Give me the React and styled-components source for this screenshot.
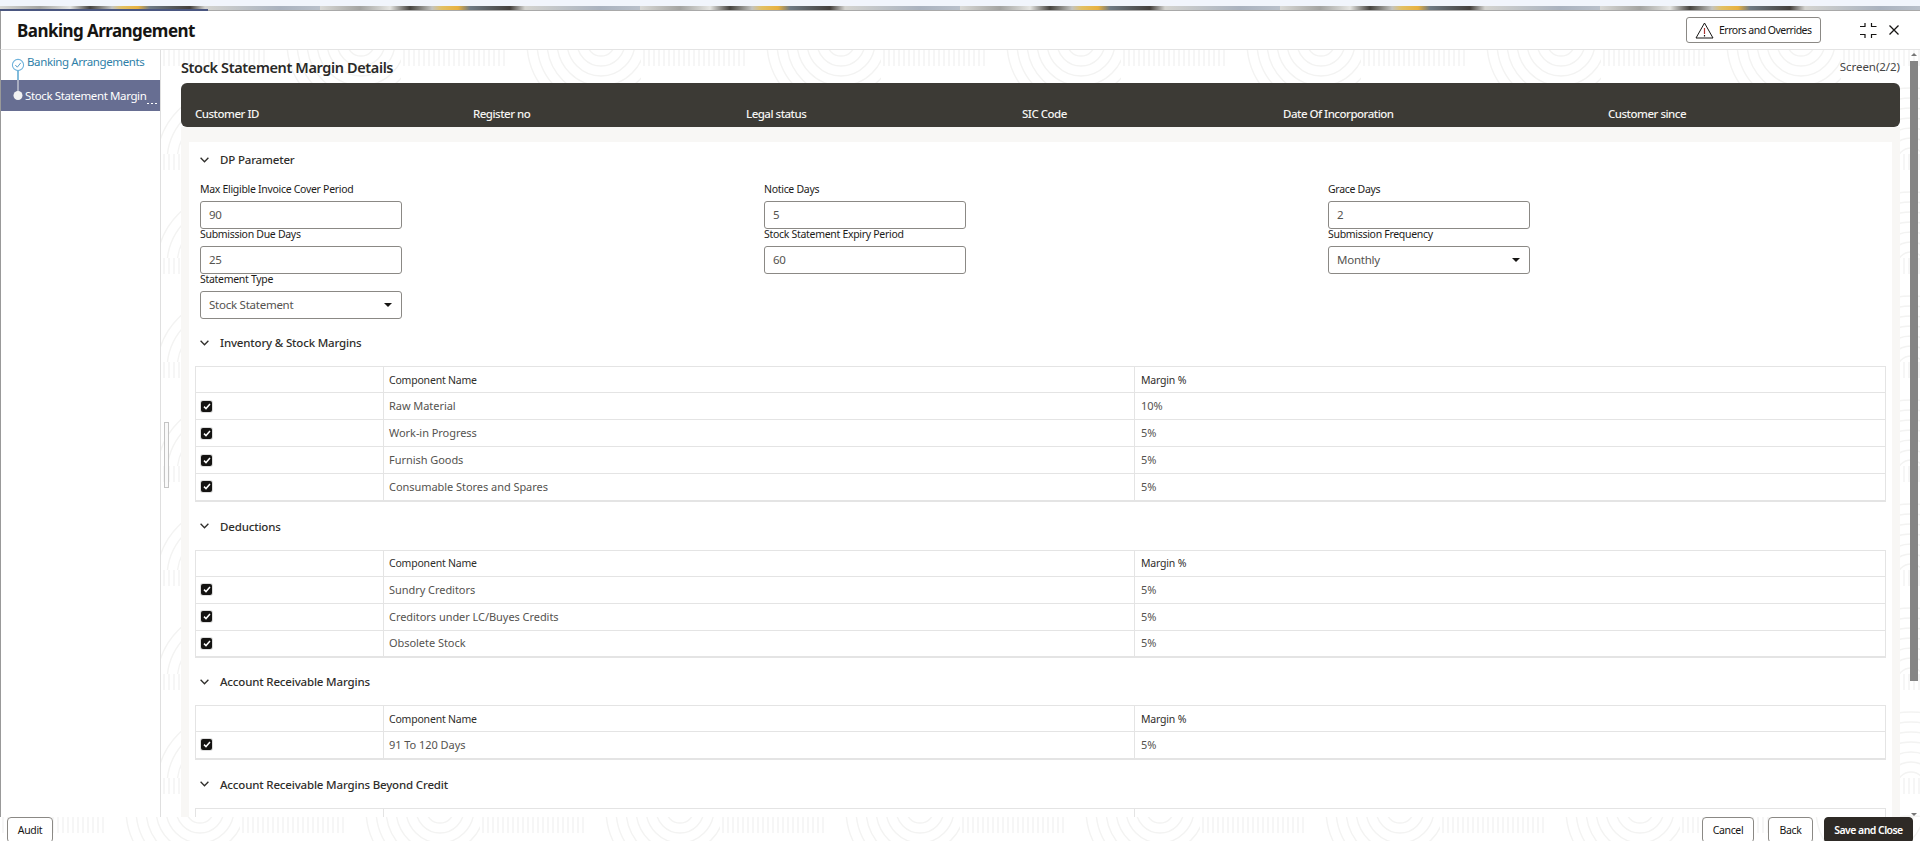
import React from 'react';
import styled, { createGlobalStyle } from 'styled-components';

// light fingerprint texture used behind the content area and the footer
const arcs = [14, 24, 34, 44, 54, 64, 74]
  .map(r => `<circle cx="70" cy="112" r="${r}"/><circle cx="200" cy="-8" r="${r}"/>`)
  .join('');
const ticks = Array.from({ length: 22 })
  .map((_, i) => `<path d="M${118 + i * 5} 56v44"/><path d="M${i * 5 - 2} 0v16"/>`)
  .join('');
const patternSvg = `<svg xmlns="http://www.w3.org/2000/svg" width="240" height="104"><g fill="none" stroke="#f3f3f2" stroke-width="1.4">${arcs}${ticks}</g></svg>`;
const patternUrl = `url("data:image/svg+xml,${encodeURIComponent(patternSvg)}")`;

const GlobalStyle = createGlobalStyle`
  html, body {
    margin: 0;
    background: #fff;
    font-family: "Noto Sans", "Open Sans", Arial, sans-serif;
  }
  * {
    box-sizing: border-box;
  }
`;

const Page = styled.div`
  position: relative;
  display: flex;
  flex-direction: column;
  width: 1920px;
  height: 841px;
  overflow: hidden;
  background: #fff;
`;

const Banner = styled.div`
  flex: none;
  height: 11px;
  border-top: 6px solid #f1f5fc;
  border-bottom: 1px solid #a9a9a9;
  background: repeating-linear-gradient(
    90deg,
    #d9d9d6 0,
    #a3a3a0 40px,
    #e5e5e2 70px,
    #45433f 90px,
    #c4c4c0 112px,
    #e2c063 122px,
    #e8b13f 138px,
    #6f7b85 150px,
    #44403c 190px,
    #d4d4d0 205px,
    #a9b2bf 280px,
    #b9c0ca 320px
  );
`;

const Progress = styled.div`
  position: absolute;
  left: 0;
  top: 9px;
  width: 208px;
  height: 2px;
  background: #4a5680;
`;

const Header = styled.header`
  flex: none;
  display: flex;
  align-items: center;
  height: 39px;
  padding: 0 21px 0 16px;
  border-left: 1px solid #999;
  border-bottom: 1px solid #e4e4e4;
  color: #161513;
`;

const Title = styled.h1`
  flex: 1;
  margin: 0;
  font-size: 17px;
  font-weight: 700;
  letter-spacing: -0.55px;
`;

const ErrorsButton = styled.button`
  display: flex;
  align-items: center;
  gap: 5px;
  width: 135px;
  height: 26px;
  margin-right: 39px;
  padding: 0 8px;
  background: #fff;
  border: 1px solid #8b8985;
  border-radius: 3px;
  font: 400 10.5px "Noto Sans", sans-serif;
  letter-spacing: -0.5px;
  color: #161513;
  white-space: nowrap;
`;

const HeaderIcon = styled.svg`
  display: block;
  flex: none;
  margin-right: ${props => props.$gap || 0}px;
`;

const Body = styled.div`
  flex: 1;
  display: flex;
  min-height: 0;
`;

const Sidebar = styled.nav`
  flex: none;
  width: 161px;
  background: #fff;
  border-left: 1px solid #999;
  border-right: 1px solid #dfdfdf;
`;

const Step = styled.div`
  position: relative;
  display: flex;
  align-items: flex-start;
  height: ${props => (props.$active ? 31 : 30)}px;
  background: ${props => (props.$active ? '#676e92' : 'transparent')};
  color: ${props => (props.$active ? '#fff' : '#2f7fa8')};
  font-size: 11.5px;
  letter-spacing: -0.38px;
  white-space: nowrap;
`;

const StepMarker = styled.svg`
  display: block;
  flex: none;
  margin-left: 5px;
`;

const StepLabel = styled.span`
  margin-left: ${props => (props.$active ? -1 : 1)}px;
  line-height: 16px;
  padding-top: ${props => (props.$active ? 8 : 4)}px;
`;

const Dots = styled.span`
  position: absolute;
  right: 3px;
  bottom: 7px;
  width: 10px;
  height: 1px;
  background: repeating-linear-gradient(90deg, #fff 0, #fff 2px, transparent 2px, transparent 4px);
`;

const Main = styled.main`
  position: relative;
  flex: 1;
  min-width: 0;
  padding: 0 20px 0 20px;
  overflow: hidden;
  background: #fff ${patternUrl};
`;

const PageHead = styled.div`
  display: flex;
  align-items: center;
  justify-content: space-between;
  height: 33px;
`;

const PageTitle = styled.h2`
  margin: 0;
  font-size: 14.5px;
  font-weight: 600;
  letter-spacing: -0.38px;
  color: #2a2927;
`;

const ScreenNo = styled.span`
  font-size: 11.5px;
  letter-spacing: -0.05px;
  color: #444;
`;

const InfoBar = styled.div`
  display: flex;
  align-items: flex-end;
  height: 44px;
  padding: 0 0 4px 14px;
  background: #3c3a35;
  border-radius: 6px;
  color: #f5f4f2;
`;

const InfoLabel = styled.span`
  flex: none;
  width: ${props => props.$width}px;
  font-size: 11.5px;
  font-weight: 500;
  letter-spacing: -0.5px;
  line-height: 18px;
`;

const Panel = styled.div`
  padding: 15px 8px 0;
  background: #f8f7f5;
`;

const Card = styled.div`
  padding-bottom: 40px;
  background: #fff;
`;

const SectionHead = styled.div`
  display: flex;
  align-items: center;
  height: 36px;
  margin-top: ${props => props.$top}px;
  padding: 0 0 1px 11px;
  color: #2f2e2b;
  font-size: 11.5px;
  font-weight: 500;
  letter-spacing: -0.17px;
`;

const Chevron = styled.svg`
  display: block;
  flex: none;
  margin-right: 11px;
`;

const FieldGrid = styled.div`
  display: grid;
  grid-template-columns: repeat(3, 564px);
  grid-auto-rows: 45px;
  margin-top: 6px;
  padding-left: 11px;
`;

const Field = styled.div`
  display: flex;
  flex-direction: column;
  width: 202px;
`;

const FieldLabel = styled.label`
  height: 17px;
  font-size: 10.5px;
  line-height: 10px;
  letter-spacing: -0.3px;
  color: #1d1c1a;
  white-space: nowrap;
`;

const InputBox = styled.div`
  display: flex;
  align-items: center;
  justify-content: space-between;
  height: 28px;
  padding: 0 9px 2px 8px;
  background: #fff;
  border: 1px solid #8b8985;
  border-radius: 3px;
  font-size: 11.5px;
  letter-spacing: -0.25px;
  color: #55534f;
`;

const Caret = styled.span`
  width: 0;
  height: 0;
  margin-top: 2px;
  border-left: 4px solid transparent;
  border-right: 4px solid transparent;
  border-top: 4px solid #161513;
`;

const Table = styled.table`
  width: 1691px;
  margin: 5px 0 0 6px;
  border-collapse: collapse;
  table-layout: fixed;
  font-size: 11px;
  color: #55534f;
  border-bottom: 2px solid #e4e4e4;

  col:first-child {
    width: 188px;
  }
  col:nth-child(2) {
    width: 751px;
  }
  th:last-child,
  td:last-child {
    padding-left: 6px;
  }
`;

const HeadCell = styled.th`
  height: 26px;
  padding: 0 5px;
  border: 1px solid #e4e4e4;
  font-size: 10.5px;
  font-weight: 400;
  letter-spacing: -0.2px;
  text-align: left;
  color: #2f2e2b;
`;

const Cell = styled.td`
  height: 27px;
  padding: 0 5px 1px;
  border: 1px solid #e4e4e4;
  font-size: 11px;
  letter-spacing: -0.05px;
`;

const Check = styled.span`
  display: flex;
  align-items: center;
  justify-content: center;
  width: 11px;
  height: 11px;
  margin-top: 1px;
  background: #141311;
  border-radius: 2px;
  box-shadow: 0 0 0 1px #ddd;
`;

const Scrollbar = styled.div`
  position: absolute;
  top: 3px;
  right: 2px;
  display: flex;
  flex-direction: column;
  align-items: center;
  width: 8px;
  height: 763px;
`;

const ScrollArrow = styled.span`
  flex: none;
  width: 0;
  height: 0;
  border-left: 3px solid transparent;
  border-right: 3px solid transparent;
  border-${props => (props.$down ? 'top' : 'bottom')}: 3px solid #777;
`;

const ScrollThumb = styled.span`
  flex: none;
  width: 8px;
  height: 620px;
  margin: 5px 0 auto;
  background: #858585;
`;

const Handle = styled.span`
  position: absolute;
  left: 3px;
  top: 372px;
  width: 5px;
  height: 66px;
  background: #fafafa;
  border: 1px solid #c4c4c4;
`;

const Footer = styled.footer`
  flex: none;
  display: flex;
  justify-content: space-between;
  height: 24px;
  padding: 0 7px;
  background: #fff ${patternUrl};
  position: relative;
`;

const FooterGroup = styled.div`
  display: flex;
`;

const FooterButton = styled.button`
  width: ${props => props.$width}px;
  height: 26px;
  margin-left: ${props => props.$left || 0}px;
  padding: 0;
  background: ${props => (props.$primary ? '#2e2a26' : '#fff')};
  border: 1px solid ${props => (props.$primary ? '#2e2a26' : '#8b8985')};
  border-radius: 4px;
  font: ${props => (props.$primary ? 600 : 400)} 10.5px "Noto Sans", sans-serif;
  letter-spacing: ${props => (props.$primary ? -0.55 : -0.35)}px;
  color: ${props => (props.$primary ? '#fff' : '#161513')};
`;

const WarningIcon = () => (
  <HeaderIcon width="19" height="17" viewBox="0 0 19 17" fill="none">
    <path d="M9.5 1 18 16H1L9.5 1Z" stroke="#161513" strokeWidth="1" strokeLinejoin="round" />
    <path d="M9.5 6v6" stroke="#a33" strokeWidth="1.2" />
    <path d="M9.5 13v1.5" stroke="#161513" strokeWidth="1.2" />
  </HeaderIcon>
);

const CompressIcon = () => (
  <HeaderIcon width="17" height="15" viewBox="0 0 17 15" fill="none" $gap={12}>
    <path d="M0 3.5h5V0M11.5 0v3.5h5M0 11.5h5V15M16.5 11.5h-5V15" stroke="#161513" strokeWidth="1.2" />
  </HeaderIcon>
);

const CloseIcon = () => (
  <HeaderIcon width="10" height="10" viewBox="0 0 10 10" fill="none">
    <path d="M.5.5l9 9M9.5.5l-9 9" stroke="#161513" strokeWidth="1.3" />
  </HeaderIcon>
);

const DownChevron = () => (
  <Chevron width="9" height="6" viewBox="0 0 9 6" fill="none">
    <path d="M.6.8 4.5 4.8 8.4.8" stroke="#2f2e2b" strokeWidth="1.3" />
  </Chevron>
);

const CheckBox = () => (
  <Check>
    <svg width="8" height="7" viewBox="0 0 8 7" fill="none">
      <path d="M1 3.6 3 5.6 7 1" stroke="#fff" strokeWidth="1.5" />
    </svg>
  </Check>
);

const sections = [
  {
    title: 'Inventory & Stock Margins',
    top: 6,
    rows: [
      ['Raw Material', '10%'],
      ['Work-in Progress', '5%'],
      ['Furnish Goods', '5%'],
      ['Consumable Stores and Spares', '5%'],
    ],
  },
  {
    title: 'Deductions',
    top: 7,
    rows: [
      ['Sundry Creditors', '5%'],
      ['Creditors under LC/Buyes Credits', '5%'],
      ['Obsolete Stock', '5%'],
    ],
  },
  {
    title: 'Account Receivable Margins',
    top: 6,
    rows: [['91 To 120 Days', '5%']],
  },
  // only the top edge of this last table shows above the footer
  {
    title: 'Account Receivable Margins Beyond Credit',
    top: 7,
    rows: [],
    noLabels: true,
  },
];

const fields = [
  { label: 'Max Eligible Invoice Cover Period', value: '90' },
  { label: 'Notice Days', value: '5' },
  { label: 'Grace Days', value: '2' },
  { label: 'Submission Due Days', value: '25' },
  { label: 'Stock Statement Expiry Period', value: '60' },
  { label: 'Submission Frequency', value: 'Monthly', select: true },
  { label: 'Statement Type', value: 'Stock Statement', select: true },
];

const infoLabels = [
  ['Customer ID', 278],
  ['Register no', 273],
  ['Legal status', 276],
  ['SIC Code', 261],
  ['Date Of Incorporation', 325],
  ['Customer since', 200],
];

const App = () => {
  return (
    <Page>
      <GlobalStyle />
      <Banner />
      <Progress />
      <Header>
        <Title>Banking Arrangement</Title>
        <ErrorsButton>
          <WarningIcon />
          Errors and Overrides
        </ErrorsButton>
        <CompressIcon />
        <CloseIcon />
      </Header>
      <Body>
        <Sidebar>
          <Step>
            <StepMarker width="20" height="30" viewBox="0 0 20 30" fill="none">
              <circle cx="12" cy="15" r="5.6" stroke="#6fb3dc" strokeWidth="1.1" />
              <path d="M9.3 15 11.3 17.2 14.8 12.8" stroke="#5a9fca" strokeWidth="1" />
              <path d="M12 21v9" stroke="#2f8fc4" strokeWidth="1.2" />
            </StepMarker>
            <StepLabel>Banking Arrangements</StepLabel>
          </Step>
          <Step $active>
            <StepMarker width="20" height="31" viewBox="0 0 20 31" fill="none">
              <path d="M12 0v12" stroke="#d5d7e0" strokeWidth="1.2" />
              <circle cx="12" cy="15.5" r="4.5" fill="#f2f2f2" />
            </StepMarker>
            <StepLabel $active>Stock Statement Margin</StepLabel>
            <Dots />
          </Step>
        </Sidebar>
        <Main>
          <Handle />
          <PageHead>
            <PageTitle>Stock Statement Margin Details</PageTitle>
            <ScreenNo>Screen(2/2)</ScreenNo>
          </PageHead>
          <InfoBar>
            {infoLabels.map(([label, width]) => (
              <InfoLabel key={label} $width={width}>
                {label}
              </InfoLabel>
            ))}
          </InfoBar>
          <Panel>
            <Card>
              <SectionHead $top={0}>
                <DownChevron />
                DP Parameter
              </SectionHead>
              <FieldGrid>
                {fields.map(field => (
                  <Field key={field.label}>
                    <FieldLabel>{field.label}</FieldLabel>
                    <InputBox>
                      {field.value}
                      {field.select && <Caret />}
                    </InputBox>
                  </Field>
                ))}
              </FieldGrid>
              {sections.map(section => (
                <React.Fragment key={section.title}>
                  <SectionHead $top={section.top}>
                    <DownChevron />
                    {section.title}
                  </SectionHead>
                  <Table>
                    <colgroup>
                      <col />
                      <col />
                      <col />
                    </colgroup>
                    <thead>
                      <tr>
                        <HeadCell />
                        <HeadCell>{!section.noLabels && 'Component Name'}</HeadCell>
                        <HeadCell>{!section.noLabels && 'Margin %'}</HeadCell>
                      </tr>
                    </thead>
                    <tbody>
                      {section.rows.map(([name, margin]) => (
                        <tr key={name}>
                          <Cell>
                            <CheckBox />
                          </Cell>
                          <Cell>{name}</Cell>
                          <Cell>{margin}</Cell>
                        </tr>
                      ))}
                    </tbody>
                  </Table>
                </React.Fragment>
              ))}
            </Card>
          </Panel>
          <Scrollbar>
            <ScrollArrow />
            <ScrollThumb />
            <ScrollArrow $down />
          </Scrollbar>
        </Main>
      </Body>
      <Footer>
        <FooterButton $width={46}>Audit</FooterButton>
        <FooterGroup>
          <FooterButton $width={52}>Cancel</FooterButton>
          <FooterButton $width={45} $left={14}>
            Back
          </FooterButton>
          <FooterButton $width={89} $left={11} $primary>
            Save and Close
          </FooterButton>
        </FooterGroup>
      </Footer>
    </Page>
  );
};

export default App;
